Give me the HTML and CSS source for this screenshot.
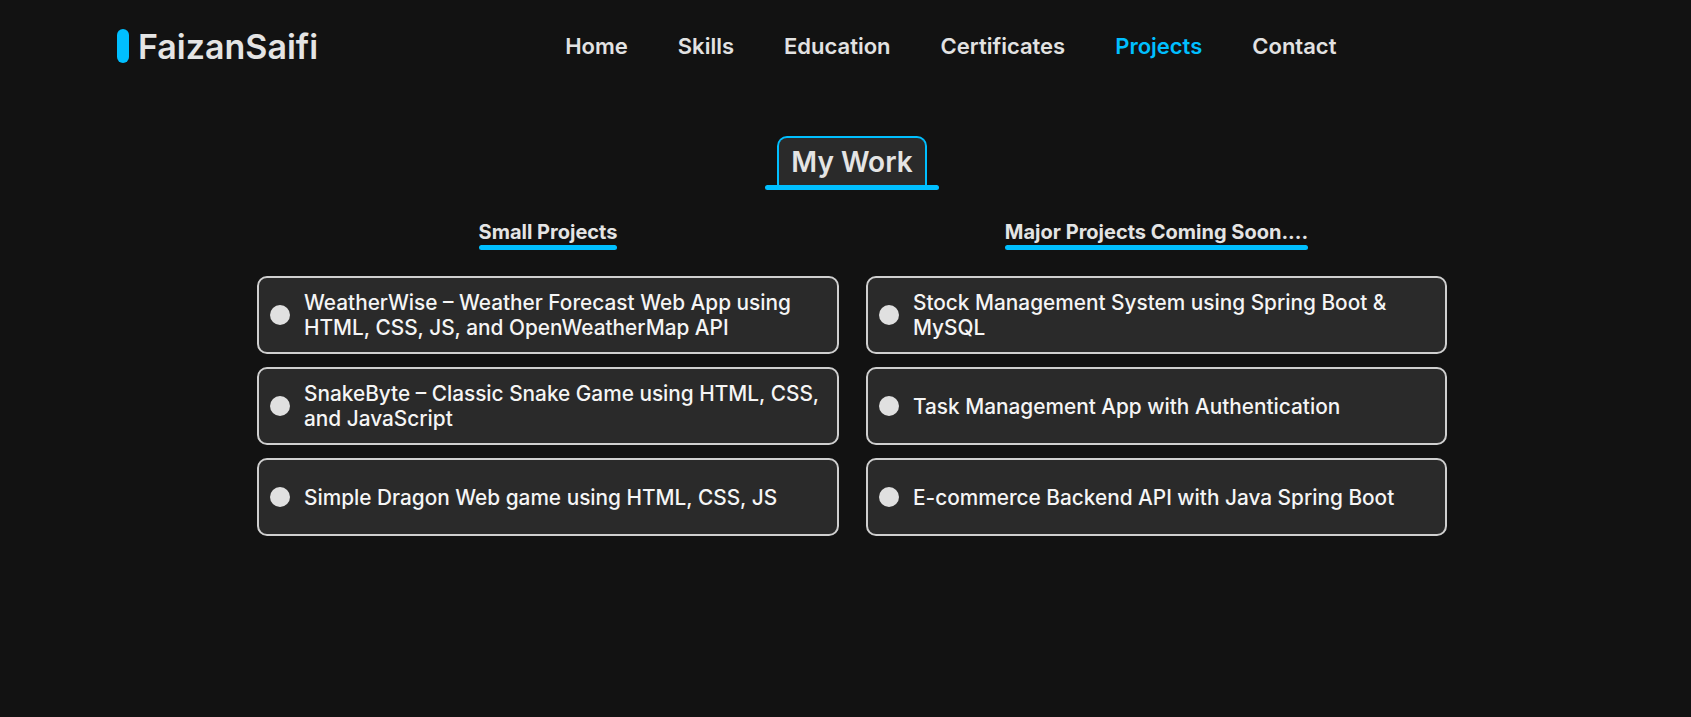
FILE: index.html
```html
<!DOCTYPE html>
<html lang="en">
<head>
<meta charset="UTF-8">
<title>FaizanSaifi - Projects</title>
<link rel="stylesheet" href="styles.css">
</head>
<body>
<header class="header">
  <a class="logo" href="#"><span class="logo-bar"></span><span class="logo-text">FaizanSaifi</span></a>
  <nav class="nav">
    <a href="#">Home</a>
    <a href="#">Skills</a>
    <a href="#">Education</a>
    <a href="#">Certificates</a>
    <a href="#" class="active">Projects</a>
    <a href="#">Contact</a>
  </nav>
</header>
<main class="main">
  <div class="title-wrap">
    <h2 class="title">My Work</h2>
    <div class="title-bar"></div>
  </div>
  <div class="columns">
    <section class="column">
      <h3 class="sub">Small Projects</h3>
      <ul class="list">
        <li class="card"><span class="dot"></span><span class="card-text">WeatherWise – Weather Forecast Web App using HTML, CSS, JS, and OpenWeatherMap API</span></li>
        <li class="card"><span class="dot"></span><span class="card-text">SnakeByte – Classic Snake Game using HTML, CSS, and JavaScript</span></li>
        <li class="card"><span class="dot"></span><span class="card-text">Simple Dragon Web game using HTML, CSS, JS</span></li>
      </ul>
    </section>
    <section class="column">
      <h3 class="sub">Major Projects Coming Soon....</h3>
      <ul class="list">
        <li class="card"><span class="dot"></span><span class="card-text">Stock Management System using Spring Boot &amp; MySQL</span></li>
        <li class="card"><span class="dot"></span><span class="card-text">Task Management App with Authentication</span></li>
        <li class="card"><span class="dot"></span><span class="card-text">E-commerce Backend API with Java Spring Boot</span></li>
      </ul>
    </section>
  </div>
</main>
</body>
</html>
```
FILE: styles.css
```css
* { box-sizing: border-box; }
html, body { margin: 0; padding: 0; }
body {
  background: #121212;
  color: #e6e6e6;
  font-family: Inter, "Noto Sans", sans-serif;
  min-height: 717px;
}
a { text-decoration: none; color: inherit; }

.header {
  display: flex;
  align-items: center;
  height: 92px;
  padding-left: 117px;
}
.logo {
  display: flex;
  align-items: center;
  gap: 9px;
}
.logo-bar {
  width: 12px;
  height: 34px;
  border-radius: 6px;
  background: #00bfff;
}
.logo-text {
  font-size: 34px;
  font-weight: 600;
  color: #e4e4e4;
}
.nav {
  display: flex;
  gap: 50px;
  margin-left: 247px;
}
.nav a {
  font-size: 22px;
  font-weight: 600;
  color: #e2e2e2;
}
.nav a.active { color: #00bfff; }

.main {
  padding-left: 13px;
}
.title-wrap {
  display: flex;
  flex-direction: column;
  align-items: center;
  margin-top: 44px;
}
.title {
  margin: 0;
  padding: 7px 12px 6px;
  border: 2px solid #00bfff;
  border-bottom: none;
  border-radius: 10px 10px 0 0;
  background: #2a2a2a;
  font-size: 28px;
  font-weight: 600;
  line-height: 34px;
  color: #e4e4e4;
}
.title-bar {
  width: 174px;
  height: 5px;
  border-radius: 3px;
  background: #00bfff;
}

.columns {
  display: grid;
  grid-template-columns: 582px 581px;
  gap: 27px;
  justify-content: center;
  margin-top: 31px;
}
.column {
  display: flex;
  flex-direction: column;
  align-items: center;
}
.sub {
  margin: 0;
  font-size: 20px;
  font-weight: 700;
  line-height: 23px;
  color: #e4e4e4;
}
.sub::after {
  content: "";
  display: block;
  height: 5px;
  margin-top: 1px;
  border-radius: 3px;
  background: #00bfff;
}
.list {
  list-style: none;
  margin: 26px 0 0;
  padding: 0;
  width: 100%;
  display: grid;
  grid-auto-rows: 1fr;
  gap: 13px;
}
.card {
  display: flex;
  align-items: center;
  gap: 14px;
  min-height: 78px;
  padding: 10px 16px 10px 11px;
  border: 2px solid #cfcfcf;
  border-radius: 10px;
  background: #2a2a2a;
}
.dot {
  flex-shrink: 0;
  width: 20px;
  height: 20px;
  border-radius: 50%;
  background: #e0e0e0;
}
.card-text {
  font-size: 20.8px;
  font-weight: 500;
  line-height: 25px;
  color: #f5f5f5;
}
```
